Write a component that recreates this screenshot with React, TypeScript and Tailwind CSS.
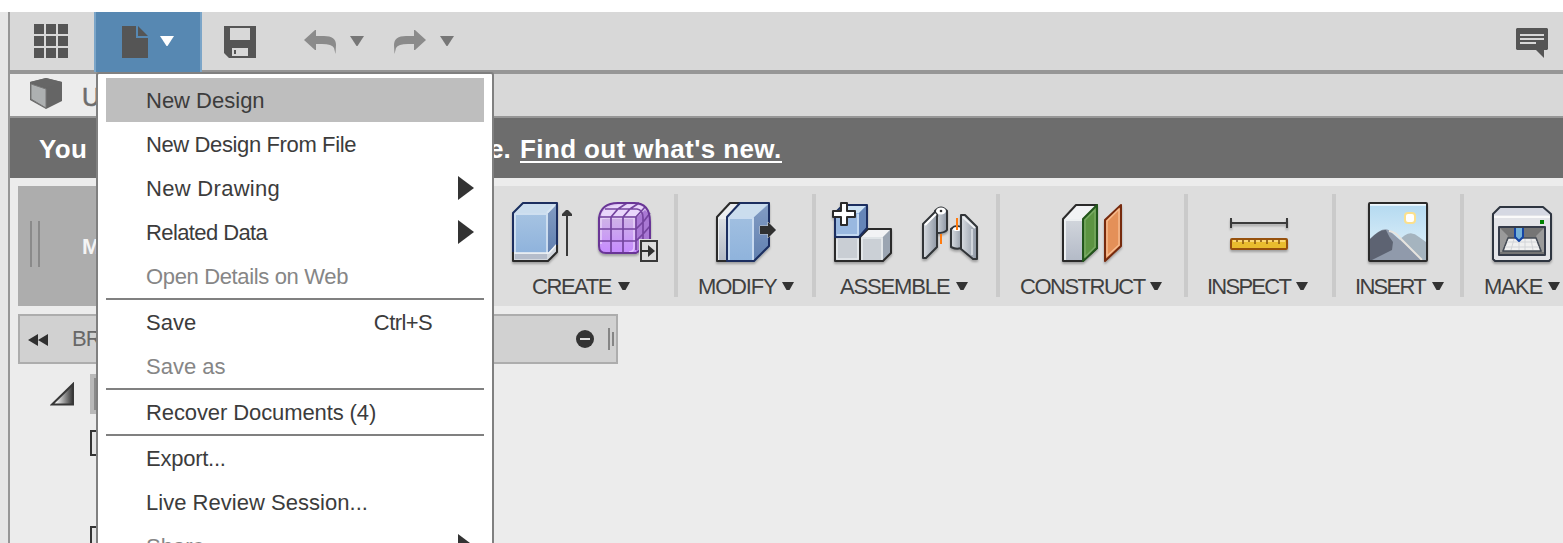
import type { ReactNode } from "react";

type Item = { label: string; ls: string; disabled?: boolean; active?: boolean; sub?: boolean; shortcut?: string; rule?: boolean };

const items: Item[] = [
  { label: "New Design", ls: "tracking-[0px]", active: true },
  { label: "New Design From File", ls: "tracking-[-0.38px]" },
  { label: "New Drawing", ls: "tracking-[0.3px]", sub: true },
  { label: "Related Data", ls: "tracking-[-0.6px]", sub: true },
  { label: "Open Details on Web", ls: "tracking-[-0.35px]", disabled: true, rule: true },
  { label: "Save", ls: "tracking-[0px]", shortcut: "Ctrl+S" },
  { label: "Save as", ls: "tracking-[0px]", disabled: true, rule: true },
  { label: "Recover Documents (4)", ls: "tracking-[-0.1px]", rule: true },
  { label: "Export...", ls: "tracking-[-0.25px]" },
  { label: "Live Review Session...", ls: "tracking-[0.03px]" },
  { label: "Share", ls: "tracking-[0px]", disabled: true, sub: true },
];

function MenuRow({ item }: { item: Item }) {
  const bg = item.active ? "bg-[#bebebe]" : "";
  const fg = item.disabled ? "text-[#868686]" : "text-[#3c3c3c]";
  return (
    <>
      <div className={`flex h-11 shrink-0 items-center pl-10 pr-2.5 text-[22px] leading-[42px] ${bg} ${fg}`}>
        <span className={`whitespace-nowrap pt-0.5 ${item.ls}`}>{item.label}</span>
        <span className="flex-1" />
        {item.shortcut && <span className="mr-[42px] pt-0.5 tracking-[-0.6px]">{item.shortcut}</span>}
        {item.sub && (
          <svg width="16" height="24" viewBox="0 0 16 24">
            <path d="M0 0L16 12L0 24Z" fill="#333" />
          </svg>
        )}
      </div>
      {item.rule && <div className="h-0.5 shrink-0 bg-[#808080]" />}
    </>
  );
}

function Caret({ fill, className }: { fill: string; className?: string }) {
  return (
    <svg width="14" height="10" viewBox="0 0 14 10" className={className}>
      <path d="M0 0H14L7.500 10H6.500Z" fill={fill} />
    </svg>
  );
}

function Defs() {
  return (
    <defs>
      <linearGradient id="blue" x1="0" y1="0" x2="0" y2="1"><stop stopColor="#a6c3e2" /><stop offset="1" stopColor="#8fb3dc" /></linearGradient>
      <linearGradient id="side" x1="0" y1="0" x2="0" y2="1"><stop stopColor="#829cc3" /><stop offset="1" stopColor="#6180b0" /></linearGradient>
      <linearGradient id="grey" x1="0" y1="0" x2="0" y2="1"><stop stopColor="#dcdfe3" /><stop offset="1" stopColor="#b3bac7" /></linearGradient>
      <linearGradient id="steel" x1="0" y1="0" x2="1" y2="0"><stop stopColor="#d9dde2" /><stop offset="1" stopColor="#8d96a3" /></linearGradient>
      <linearGradient id="purple" x1="0" y1="0" x2="0" y2="1"><stop stopColor="#e2cdf7" /><stop offset="0.35" stopColor="#ceb0e8" /><stop offset="1" stopColor="#c68aff" /></linearGradient>
      <linearGradient id="sky" x1="0" y1="0" x2="0" y2="1"><stop stopColor="#b3d9f0" /><stop offset="1" stopColor="#e4f3fb" /></linearGradient>
      <filter id="soft" x="-20%" y="-20%" width="140%" height="150%"><feDropShadow dx="0" dy="2" stdDeviation="1" floodColor="#000" floodOpacity="0.28" /></filter>
    </defs>
  );
}

function CreateArt() {
  return (
    <>
      <Defs />
      <g filter="url(#soft)" strokeLinejoin="round">
        <path d="M513 213L523 203H557V251L548 261H513Z" fill="#d3d8df" />
        <path d="M513 213H548V253H513Z" fill="url(#blue)" />
        <path d="M548 213L557 203V244L548 253Z" fill="url(#side)" />
        <path d="M513 213L523 203H557L548 213Z" fill="#cbddee" />
        <path d="M515 254H547V259H515Z" fill="#b5bdcb" />
        <path d="M515 253V214H547V254M547 213L555 205" fill="none" stroke="#dce8f4" strokeWidth="2" opacity=".75" />
        <path d="M514 253H549L557 244" fill="none" stroke="#f1f3f6" strokeWidth="1.5" />
        <path d="M513 252V213L523 203H557V245" fill="none" stroke="#1b2f60" strokeWidth="2" />
        <path d="M513 252V261H548L557 252V245" fill="none" stroke="#2b2b2b" strokeWidth="2" />
      </g>
      <path d="M567 256V213" stroke="#3a3a3a" strokeWidth="2" />
      <path d="M562 216V214L566 210H568L572 214V216Z" fill="#3a3a3a" />
      <g filter="url(#soft)">
        <path d="M599 218Q601 203 618 203H634Q650 203 650 222V239Q646 247 636 253H606Q599 253 599 246Z" fill="url(#purple)" />
        <path d="M636 218L645 210Q650 213 649 222V239Q646 247 636 251Z" fill="#a978d4" />
        <path d="M601 214Q606 206 618 205H634Q640 205 644 208L636 216H602Z" fill="#e9d6fb" />
        <path d="M601 244V219Q602 218 607 218H634V247Q634 252 629 252" fill="none" stroke="#f6e9ff" strokeWidth="1.6" opacity=".6" />
        <path d="M599 217H636V250M599 229H636L644 221L650 213M599 241H636L644 233L650 226M611 253V217L618 209L627 203M623 253V217L630 209L639 203M605 209H637Q643 210 643 218V246M636 217L645 207" fill="none" stroke="#74449f" strokeWidth="1.7" />
        <path d="M599 218Q601 203 618 203H634Q650 203 650 222V239Q646 247 636 253H606Q599 253 599 246Z" fill="none" stroke="#693696" strokeWidth="2" />
      </g>
      <path d="M639 239H659V263H639Z" fill="#dedede" />
      <path d="M641 241H657V261H641Z" fill="#dedede" stroke="#383838" strokeWidth="2" />
      <path d="M640 250H648V245L655 251L648 257V252H640Z" fill="#333" />
    </>
  );
}

function ModifyArt() {
  return (
    <>
      <g filter="url(#soft)" strokeLinejoin="round">
        <path d="M717 217L730 203H745V261H717Z" fill="#eceef0" stroke="#292929" strokeWidth="2" />
        <path d="M719 219H726V260H719Z" fill="url(#grey)" />
        <path d="M727 217L740 203H769V246L754 261H727Z" fill="url(#blue)" />
        <path d="M754 217L769 204V246L754 261Z" fill="url(#side)" />
        <path d="M728 217L740 204H768L754 217Z" fill="#cbddee" />
        <path d="M729 260V218H753V260" fill="none" stroke="#d8e6f5" strokeWidth="2" opacity=".75" />
        <path d="M727 217L740 203H769V246L754 261H727Z" fill="none" stroke="#1b2f60" strokeWidth="2" />
      </g>
      <path d="M760 226H768V222L776 230L768 238V234H760Z" fill="#303030" stroke="#c9ccd2" strokeWidth="1" paintOrder="stroke" />
    </>
  );
}

function AssembleArt() {
  return (
    <>
      <g filter="url(#soft)" strokeLinejoin="round">
        <path d="M835 237H860V261H835Z" fill="#c9ced4" stroke="#2b2b2b" strokeWidth="2" />
        <path d="M860 237L868 229H891V253L883 261H860Z" fill="#cbd0d6" />
        <path d="M860 237L868 229H891L883 237Z" fill="#f2f3f5" />
        <path d="M883 237L891 229V253L883 261Z" fill="#9ba5b2" />
        <path d="M862 260V238H882V260M837 239V259H858V239" fill="none" stroke="#e8ebee" strokeWidth="1.6" />
        <path d="M860 237L868 229H891V253L883 261H860Z" fill="none" stroke="#2b2b2b" strokeWidth="2" />
        <path d="M835 213L843 205H867V228L859 237H835Z" fill="#99b8e0" />
        <path d="M835 213L843 205H867L859 213Z" fill="#cde2f4" />
        <path d="M859 213L867 205V228L859 237Z" fill="#6585b8" />
        <path d="M837 235H858V214" fill="none" stroke="#c3d9f2" strokeWidth="2" />
        <path d="M835 213L843 205H867V228L859 237H835Z" fill="none" stroke="#1b2f60" strokeWidth="2" />
        <path d="M841 203H847V211H855V217H847V225H841V217H833V211H841Z" fill="#fff" stroke="#2b2b2b" strokeWidth="2" />
      </g>
      <g filter="url(#soft)" stroke="#303438" strokeWidth="2" strokeLinejoin="round">
        <path d="M935 211Q941 204 947 211V230Q945 233 937 233H935Z" fill="url(#steel)" />
        <path d="M923 224L935 212Q938 214 937 217V247L926 258H923Z" fill="url(#steel)" />
        <ellipse cx="941" cy="211" rx="5" ry="3.500" fill="#fff" stroke="none" />
        <circle cx="941" cy="211" r="1.300" fill="#333" stroke="none" />
        <path d="M925 225L936 214" stroke="#fff" />
        <path d="M951 229Q957 223 963 229V246Q959 251 951 247Z" fill="url(#steel)" />
        <ellipse cx="957" cy="229" rx="4" ry="2" fill="#fff" stroke="none" />
        <path d="M961 215H965L977 227V259H973L961 249Z" fill="url(#steel)" />
        <path d="M963 217L975 228" stroke="#eef0f2" />
        <path d="M972 229V255" stroke="#dfe3e8" strokeWidth="1.5" />
      </g>
      <path d="M941 234V244M957 218V230" stroke="#ff7b0f" strokeWidth="2" />
    </>
  );
}

function ConstructArt() {
  return (
    <g filter="url(#soft)" strokeLinejoin="round">
      <path d="M1063 219L1076 205H1097V248L1083 261H1063Z" fill="url(#grey)" />
      <path d="M1064 219L1076 206H1097L1083 219Z" fill="#f2f3f5" />
      <path d="M1065 260V220H1082" fill="none" stroke="#edf0f2" strokeWidth="2" />
      <path d="M1063 219L1076 205H1097V248L1083 261H1063Z" fill="none" stroke="#2b2b2b" strokeWidth="2" />
      <path d="M1083 219L1097 205V248L1083 261Z" fill="#5b9443" stroke="#24561b" strokeWidth="2" />
      <path d="M1085 257V220L1095 210V247Z" fill="none" stroke="#7aab66" strokeWidth="1.3" />
      <path d="M1105 220L1121 205V246L1105 261Z" fill="#e49059" stroke="#76290b" strokeWidth="2" />
      <path d="M1107 256V221L1119 209V245Z" fill="none" stroke="#f7bd91" strokeWidth="1.4" />
    </g>
  );
}

function InspectArt() {
  return (
    <g filter="url(#soft)">
      <path d="M1231 218V228M1287 218V228M1231 223H1287" stroke="#3a3a3a" strokeWidth="2" fill="none" />
      <rect x="1231" y="239" width="56" height="10" rx="1" fill="#e9bd2e" stroke="#96510c" strokeWidth="2" />
      <path d="M1233 241H1285" stroke="#ffe18a" strokeWidth="1.5" />
      <path d="M1237 240V242M1243 240V244M1249 240V242M1255 240V244M1261 240V242M1267 240V244M1273 240V242M1279 240V244" stroke="#8b5a10" strokeWidth="1.6" />
    </g>
  );
}

function InsertArt() {
  return (
    <g filter="url(#soft)">
      <rect x="1369" y="203" width="58" height="58" fill="url(#sky)" />
      <path d="M1370 204.800H1426" stroke="#eef7fc" strokeWidth="2" />
      <path d="M1399 241Q1409 228 1419 237L1426 242V260H1399Z" fill="#a5b4bf" />
      <path d="M1370 239Q1385 223 1392 233L1423 260H1370Z" fill="#909aab" />
      <path d="M1370 239Q1380 229 1386 230Q1389 237 1393 242L1392 250Q1380 256 1372 260H1370Z" fill="#5d6472" />
      <path d="M1389 231Q1396 232 1401 239L1422 260" fill="none" stroke="#e7e4df" strokeWidth="2" />
      <rect x="1405" y="213" width="10" height="10" rx="3" fill="#fff" stroke="#fbe08d" strokeWidth="2" />
      <rect x="1369" y="203" width="58" height="58" rx="1" fill="none" stroke="#2b2b2b" strokeWidth="2" />
    </g>
  );
}

function MakeArt() {
  return (
    <g filter="url(#soft)" strokeLinejoin="round">
      <path d="M1493 214L1500 207H1543L1551 214V259L1549 261H1495L1493 259Z" fill="#e3e4e8" />
      <path d="M1494 215L1500 208H1543L1550 215Z" fill="#d5d8e2" />
      <path d="M1494 217H1550" stroke="#fafafa" strokeWidth="2" />
      <path d="M1493 214L1500 207H1543L1551 214V259L1549 261H1495L1493 259Z" fill="none" stroke="#2e3440" strokeWidth="2" />
      <rect x="1499" y="227" width="46" height="28" fill="#747474" stroke="#343b48" strokeWidth="2" />
      <path d="M1500 228L1508 236L1502 252H1500ZM1544 228L1536 236L1542 252H1544Z" fill="#9a9a9a" />
      <path d="M1508 238H1536L1541 251H1503Z" fill="#f0f0f0" stroke="#444b56" strokeWidth="1.5" />
      <path d="M1507 242H1537M1505 247H1539M1514 239L1511 250M1519 239V250M1525 239V250M1531 239L1533 250" stroke="#d2d4d8" strokeWidth="1" />
      <path d="M1515 228H1523V237L1519 241L1515 237Z" fill="#74b2d9" />
      <path d="M1515 228V237L1519 241L1523 237V228" fill="none" stroke="#1544a4" strokeWidth="2" />
      <path d="M1540 220H1544V224H1540Z" fill="#058205" />
    </g>
  );
}

type GroupProps = { label: string; width: string; pad: string; ls: string; gap: string; box: string; w: number; art: ReactNode; rule?: boolean };

const groups: GroupProps[] = [
  { label: "CREATE", width: "w-[184px]", pad: "pl-[38px]", ls: "tracking-[-1.45px]", gap: "ml-[7px]", box: "494 196 180 72", w: 180, art: <CreateArt />, rule: true },
  { label: "MODIFY", width: "w-[138px]", pad: "pl-[20px]", ls: "tracking-[-1.2px]", gap: "ml-[6px]", box: "678 196 134 72", w: 134, art: <ModifyArt />, rule: true },
  { label: "ASSEMBLE", width: "w-[184px]", pad: "pl-[24px]", ls: "tracking-[-1.15px]", gap: "ml-[7px]", box: "816 196 180 72", w: 180, art: <AssembleArt />, rule: true },
  { label: "CONSTRUCT", width: "w-[188px]", pad: "pl-[20px]", ls: "tracking-[-1.5px]", gap: "ml-[5px]", box: "1000 196 184 72", w: 184, art: <ConstructArt />, rule: true },
  { label: "INSPECT", width: "w-[148px]", pad: "pl-[19px]", ls: "tracking-[-1.75px]", gap: "ml-[6px]", box: "1188 196 144 72", w: 144, art: <InspectArt />, rule: true },
  { label: "INSERT", width: "w-[128px]", pad: "pl-[19px]", ls: "tracking-[-1.7px]", gap: "ml-[7px]", box: "1336 196 124 72", w: 124, art: <InsertArt />, rule: true },
  { label: "MAKE", width: "w-[120px]", pad: "pl-[20px]", ls: "tracking-[-1px]", gap: "ml-[6px]", box: "1464 196 120 72", w: 120, art: <MakeArt /> },
];

function Group({ g }: { g: GroupProps }) {
  return (
    <div className={`flex shrink-0 ${g.width}`}>
      <div className="flex flex-1 flex-col pt-2.5">
        <svg width={g.w} height="72" viewBox={g.box} className="shrink-0">{g.art}</svg>
        <div className={`flex h-9 items-center text-[22px] text-[#404040] ${g.pad}`}>
          <span className={g.ls}>{g.label}</span>
          <svg width="12" height="8" viewBox="0 0 12 8" className={`shrink-0 ${g.gap}`}><path d="M0 0H12L7.500 8H4.500Z" fill="#333" /></svg>
        </div>
      </div>
      {g.rule && <div className="mt-2 h-[103px] w-1 bg-[#cacaca]" />}
    </div>
  );
}

export default function App() {
  return (
    <div className="relative flex h-[543px] w-[1563px] flex-col overflow-hidden bg-white pt-3 font-['Liberation_Sans',Arial,sans-serif]">
      <div className="flex min-h-0 flex-1">
        <div className="w-2 shrink-0 bg-[#e6e6e6]" />
        <div className="w-0.5 shrink-0 bg-[#969696]" />
        <div className="flex min-w-0 flex-1 flex-col bg-[#ececec]">
          <div className="flex h-[62px] shrink-0 items-start border-b-4 border-[#969696] bg-[#d8d8d8]">
            <svg width="34" height="34" viewBox="0 0 34 34" className="ml-6 mt-3" fill="#555">
              <path d="M0 0h10v10H0zM12 0h10v10H12zM24 0h10v10H24zM0 12h10v10H0zM12 12h10v10H12zM24 12h10v10H24zM0 24h10v10H0zM12 24h10v10H12zM24 24h10v10H24z" />
            </svg>
            <div className="-mb-0.5 ml-[26px] flex h-[60px] w-[108px] shrink-0 border-x-2 border-[#7ba5c8] bg-[#5788b2]">
              <svg width="26" height="32" viewBox="0 0 26 32" className="ml-[26px] mt-3.5" fill="#555">
                <path d="M0 0H14V12H26V32H0ZM16 0L26 10H16Z" />
              </svg>
              <Caret fill="#fff" className="ml-3 mt-6" />
            </div>
            <svg width="32" height="32" viewBox="0 0 32 32" className="ml-[22px] mt-3.5">
              <path d="M0 0H32V32H5L0 27ZM6 2V14H26V2ZM8 22V30H24V22Z" fill="#555" fillRule="evenodd" />
              <path d="M10 24h2v4h-2z" fill="#555" />
            </svg>
            <svg width="32" height="24" viewBox="0 0 32 24" className="ml-12 mt-[18px]" fill="#8b8b8b">
              <path d="M0 10L11 0H12V6H20Q32 6 32 15L31.500 24L30 18Q28 14 18 14H12V20H11Z" />
            </svg>
            <Caret fill="#777" className="ml-3.5 mt-6" />
            <svg width="32" height="24" viewBox="0 0 32 24" className="ml-[30px] mt-[18px]" fill="#8b8b8b">
              <path d="M32 10L21 0H20V6H12Q0 6 0 15L.500 24L2 18Q4 14 14 14H20V20H21Z" />
            </svg>
            <Caret fill="#777" className="ml-3.5 mt-6" />
            <svg width="32" height="30" viewBox="0 0 32 30" className="ml-auto mr-[15px] mt-4">
              <path d="M1 0H31L32 1V21L31 22H28V30L20 22H1L0 21V1Z" fill="#555" />
              <path d="M4 7H28M4 11H28M4 15H20" stroke="#d8d8d8" strokeWidth="2" />
            </svg>
          </div>
          <div className="flex h-11 shrink-0 border-b-2 border-[#969696] bg-[#d8d8d8]">
            <div className="flex w-[300px] bg-[#ececec]">
              <svg width="32" height="32" viewBox="0 0 32 32" className="ml-5 mt-1">
                <path d="M0 4L16 0L32 4V23L16 31L0 22Z" fill="#656565" />
                <path d="M1 6L16 11V30L1 21Z" fill="#adb0b1" stroke="#777" strokeWidth="1" />
                <path d="M0 4L16 0L32 4L16 10Z" fill="#666" />
              </svg>
              <span className="ml-5 text-[25px] leading-[46px] text-[#6c6c6c] [-webkit-text-stroke:0.5px_#6c6c6c]">U</span>
            </div>
          </div>
          <div className="flex h-[60px] shrink-0 items-center bg-[#6d6d6d] pt-0.5 text-[26px] font-bold text-white">
            <span className="ml-[29px] w-[450px] tracking-[0.3px]">You</span>
            <span className="w-[31px]">e.</span>
            <span className="mt-px whitespace-nowrap border-b-2 border-white leading-[24px] tracking-[0.4px]">Find out what's new.</span>
          </div>
          <div className="ml-2 mt-2 flex h-[120px] shrink-0 overflow-hidden bg-[#dddddd]">
            <div className="flex w-[476px] shrink-0 items-center bg-[#adadad]">
              <div className="ml-3 h-[46px] w-2.5 -translate-y-0.5 border-x-2 border-[#8a8a8a]" />
              <span className="ml-[42px] text-[22px] font-bold text-[#f4f4f4]">M</span>
            </div>
            {groups.map((g) => <Group key={g.label} g={g} />)}
          </div>
          <div className="ml-2 mt-2 flex h-[50px] w-[600px] shrink-0 items-center border-2 border-[#adadad] bg-[#d1d1d1]">
            <svg width="20" height="12" viewBox="0 0 20 12" className="ml-2 mt-0.5" fill="#303030"><path d="M10 0V12L0 6ZM20 0V12L10 6Z" /></svg>
            <span className="-mt-0.5 ml-6 text-[22px] tracking-[-0.8px] text-[#686868]">BR</span>
            <svg width="18" height="18" viewBox="0 0 18 18" className="ml-auto"><circle cx="9" cy="9" r="9" fill="#333" /><path d="M4 9H14" stroke="#ddd" strokeWidth="2" /></svg>
            <svg width="6" height="22" viewBox="0 0 6 22" className="ml-3.5 mr-0.5"><path d="M1 0V22M5 4V18" stroke="#858585" strokeWidth="2" /></svg>
          </div>
          <div className="ml-10 flex items-start">
            <svg width="24" height="24" viewBox="0 0 24 24" className="mt-[18px]">
              <defs><linearGradient id="tree"><stop offset="0.2" stopColor="#f4f4f4" /><stop offset="1" stopColor="#333" /></linearGradient></defs>
              <path d="M2 22.500L23 2V22.500Z" fill="url(#tree)" stroke="#383838" strokeWidth="2" />
            </svg>
            <div className="ml-4 flex flex-col">
              <div className="mt-2.5 h-10 w-10 border-4 border-r-0 border-[#b9b9b9] bg-[#8b8b8b]" />
              <div className="mt-4 h-[26px] w-10 border-2 border-[#343434] bg-[#e4e4e4]" />
              <div className="mt-[70px] h-[26px] w-10 border-2 border-[#343434] bg-[#e4e4e4]" />
            </div>
          </div>
        </div>
      </div>
      <div className="absolute left-24 top-[72px] flex h-[500px] w-[398px] flex-col rounded-t-[3px] border-2 border-[#808080] bg-white px-2 pt-1">
        {items.map((item) => <MenuRow key={item.label} item={item} />)}
      </div>
    </div>
  );
}
